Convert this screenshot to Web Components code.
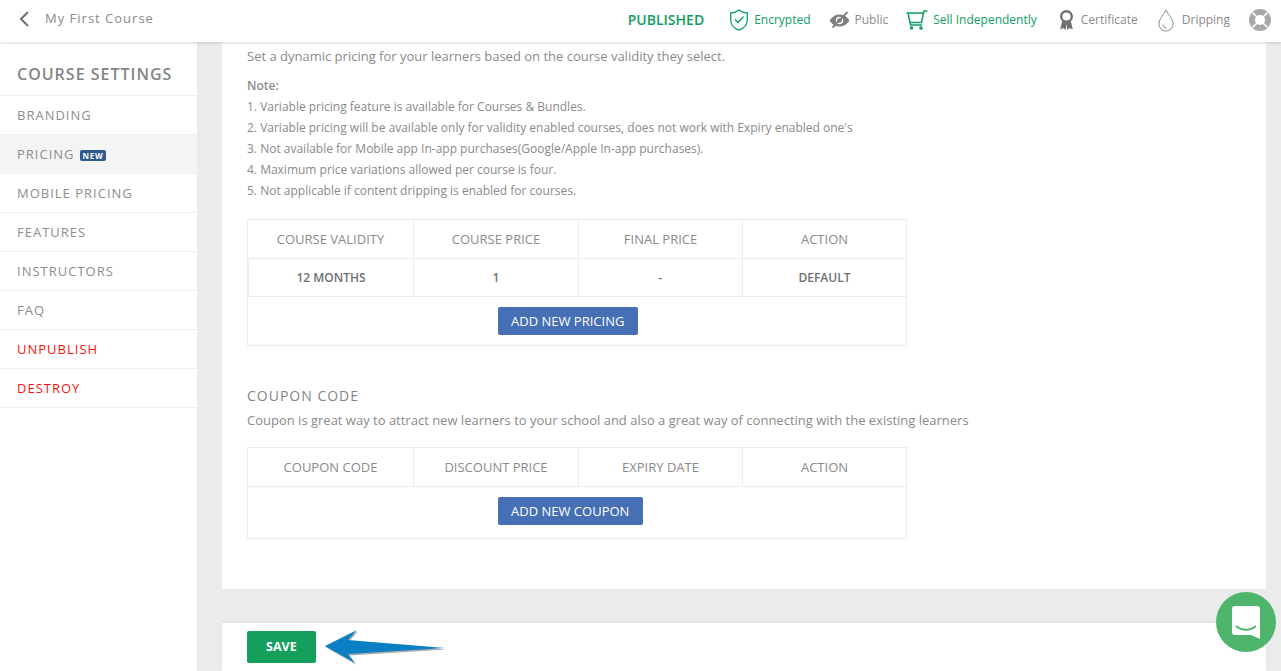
<!DOCTYPE html>
<html>
<head>
<meta charset="utf-8">
<title>Course settings</title>
<style>
    html, body { margin: 0; height: 671px; overflow: hidden; background: #ebebeb; }
    body { font-family: "Open Sans", "Liberation Sans", sans-serif; color: #8a8a8a; }
    .page { display: grid; grid-template-columns: 197px 1fr; height: 671px; grid-template-rows: 42px 1fr; }
    app-topbar { grid-column: 1 / 3; }
</style>
</head>
<body>
<div class="page">
    <app-topbar title="My First Course">
        <top-item color="#0f9d63" label="Encrypted" icon="shield" gap="6"></top-item>
        <top-item label="Public" icon="eye" gap="5"></top-item>
        <top-item color="#0f9d63" label="Sell Independently" icon="cart" gap="5"></top-item>
        <top-item label="Certificate" icon="ribbon" gap="7" style="margin-left:4px"></top-item>
        <top-item label="Dripping" icon="drop" gap="8" style="margin-left:2px"></top-item>
    </app-topbar>
    <side-nav>
        <nav-item>BRANDING</nav-item>
        <nav-item active badge="NEW">PRICING</nav-item>
        <nav-item>MOBILE PRICING</nav-item>
        <nav-item>FEATURES</nav-item>
        <nav-item>INSTRUCTORS</nav-item>
        <nav-item>FAQ</nav-item>
        <nav-item danger>UNPUBLISH</nav-item>
        <nav-item danger>DESTROY</nav-item>
    </side-nav>
    <pricing-panel></pricing-panel>
</div>
<chat-launcher></chat-launcher>

<script>
const icons = {
    shield: `<svg width="18" height="22" viewBox="0 0 18 22" fill="none" stroke="#0f9d63" stroke-width="1.3"><path d="M9 1 C11 2.800 14 3.800 17.300 4 V11 C17.300 16 13.500 19.500 9 21.200 C4.500 19.500 0.700 16 0.700 11 V4 C4 3.800 7 2.800 9 1 Z"/><path d="M5 10.500 L8 13.500 L13.500 7.500"/></svg>`,
    eye: `<svg width="21" height="18" viewBox="0 0 21 18" fill="#808080"><path d="M0.500 9.500 C4 4.500 7.500 3.500 10.500 3.500 C14 3.500 17.500 5 20.500 9.500 C17.500 14 14 15.500 10.500 15.500 C7 15.500 3.500 14 0.500 9.500 Z"/><circle cx="10.500" cy="9.500" r="3.700" fill="#fff"/><circle cx="10.500" cy="9.500" r="2.300"/><path d="M3.500 16.500 L18.500 1" stroke="#808080" stroke-width="1.800"/></svg>`,
    cart: `<svg width="22" height="20" viewBox="0 0 22 20" fill="none" stroke="#0f9d63" stroke-width="1.500"><path d="M0.500 3 H17.500 L15.500 12.500 H4 L2 3"/><path d="M17.500 3 L18.200 1 H21.500"/><path d="M4 12.500 L4.500 15 H16"/><circle cx="5.500" cy="18" r="1.800" fill="#0f9d63" stroke="none"/><circle cx="15" cy="18" r="1.800" fill="#0f9d63" stroke="none"/></svg>`,
    ribbon: `<svg width="15" height="22" viewBox="0 0 15 22"><path d="M3.200 12 L1.200 20.500 L4.600 19 L6.600 21 L7.500 15 L8.400 21 L10.400 19 L13.800 20.500 L11.800 12 L7.500 14 Z" fill="#6f6f6f"/><circle cx="7.500" cy="7.500" r="5.300" fill="#fff" stroke="#6f6f6f" stroke-width="2.400"/></svg>`,
    drop: `<svg width="16" height="23" viewBox="0 0 16 23" fill="none" stroke="#7c7c7c" stroke-width="0.900"><path d="M8 1 C10 5.500 15 9.500 15 15 C15 19 11.800 22 8 22 C4.200 22 1 19 1 15 C1 9.500 6 5.500 8 1 Z"/><path d="M5 15.500 C5 17.500 6.500 19 8.500 19.200"/></svg>`
}

class AppTopbar extends HTMLElement {
    connectedCallback() {
        const root = this.attachShadow({ mode: 'open' })
        root.innerHTML = `<style>
            :host { display: flex; align-items: center; height: 42px; background: #fff; box-shadow: 0 1px 3px rgba(0,0,0,.16); position: relative; z-index: 2; padding: 0 10px 2px 19px; box-sizing: border-box; }
            svg.back { margin-right: 16px; margin-bottom: 3px; }
            .title { font-size: 13px; letter-spacing: 1px; color: #8a8a8a; flex: 1; padding-bottom: 5px; }
            .status { font-size: 14px; font-weight: 600; color: #0f9d63; margin-right: 26px; padding-bottom: 2px; }
            .items { display: flex; align-items: center; gap: 18px; }
            .help { margin-left: 19px; display: block; }
        </style>
        <svg class="back" width="10" height="16" viewBox="0 0 10 16" fill="none" stroke="#6f6f6f" stroke-width="2"><path d="M9 1 L2 8 L9 15"/></svg>
        <span class="title">${this.getAttribute('title')}</span>
        <span class="status">PUBLISHED</span>
        <span class="items"><slot></slot></span>
        <svg class="help" width="22" height="22" viewBox="0 0 22 22"><circle cx="11" cy="11" r="8" fill="none" stroke="#a8a8a8" stroke-width="6"/><path d="M3.500 3.500 L8 8 M18.500 3.500 L14 8 M3.500 18.500 L8 14 M18.500 18.500 L14 14" stroke="#fff" stroke-width="1.600"/></svg>`
    }
}

class TopItem extends HTMLElement {
    connectedCallback() {
        const root = this.attachShadow({ mode: 'open' })
        root.innerHTML = `<style>
            :host { display: flex; align-items: center; gap: ${this.getAttribute('gap')}px; font-size: 12px; color: ${this.getAttribute('color') || '#8a8a8a'}; }
            svg { display: block; }
            span { padding-bottom: 1px; }
        </style>${icons[this.getAttribute('icon')]}<span>${this.getAttribute('label')}</span>`
    }
}

class SideNav extends HTMLElement {
    connectedCallback() {
        const root = this.attachShadow({ mode: 'open' })
        root.innerHTML = `<style>
            :host { display: block; background: #fff; height: 629px; }
            h2 { margin: 0; height: 54px; padding: 22px 17px 0; box-sizing: border-box; border-bottom: 1px solid #efefef; font-size: 16px; line-height: 20px; font-weight: 600; letter-spacing: 1px; color: #858585; }
        </style><h2>COURSE SETTINGS</h2><slot></slot>`
    }
}

class NavItem extends HTMLElement {
    connectedCallback() {
        const root = this.attachShadow({ mode: 'open' })
        const badge = this.getAttribute('badge')
        root.innerHTML = `<style>
            :host { display: flex; align-items: center; gap: 5px; height: 39px; box-sizing: border-box; padding: 0 17px 1px; border-bottom: 1px solid #efefef; font-size: 13px; letter-spacing: 1px; color: #8d8d8d; }
            :host([active]) { background: #f4f4f4; }
            :host([danger]) { color: #f8140c; }
            .badge { background: #2d5b8f; color: #fff; font-size: 8px; line-height: 11px; font-weight: 700; padding: 0 3px; border-radius: 2px; letter-spacing: .7px; margin-top: 3px; }
        </style><slot></slot>${badge ? `<span class="badge">${badge}</span>` : ''}`
    }
}

class ActionBtn extends HTMLElement {
    connectedCallback() {
        const root = this.attachShadow({ mode: 'open' })
        root.innerHTML = `<style>
            :host { display: inline-block; background: #466fb6; color: #fff; font-size: 13px; line-height: 28px; height: 28px; padding: 0 14px 0 13px; border-radius: 2px; }
            :host([save]) { background: #14a05c; font-weight: 700; font-size: 12.500px; line-height: 32px; height: 32px; padding: 0 19px; }
        </style><slot></slot>`
    }
}

class DataTable extends HTMLElement {
    connectedCallback() {
        const root = this.attachShadow({ mode: 'open' })
        const cell = (t, cls) => `<div class="${cls}">${t}</div>`
        const head = this.getAttribute('head').split('|').map(t => cell(t, 'th')).join('')
        const row = this.getAttribute('row')
        const body = row ? row.split('|').map(t => cell(t, 'td')).join('') : ''
        root.innerHTML = `<style>
            :host { display: block; width: 660px; box-sizing: border-box; border: 1px solid #ececec; font-size: 13px; }
            .grid { display: grid; grid-template-columns: 165px 165px 164px 164px; }
            .th, .td { display: flex; align-items: center; justify-content: center; border-bottom: 1px solid #ececec; border-left: 1px solid #ececec; }
            .th:first-child { border-left: 0; }
            .th { height: 38px; color: #8a8a8a; }
            .td { height: 37px; font-size: 12px; font-weight: 600; color: #6f6f6f; }
            .foot { padding: 10px 0 0 250px; height: ${this.getAttribute('foot')}px; box-sizing: border-box; }
        </style><div class="grid">${head}${body}</div><div class="foot"><slot></slot></div>`
    }
}

class PricingPanel extends HTMLElement {
    connectedCallback() {
        const root = this.attachShadow({ mode: 'open' })
        root.innerHTML = `<style>
            :host { display: flex; flex-direction: column; padding: 0 15px 0 25px; gap: 34px; height: 629px; position: relative; }
            .card { background: #fff; padding: 0 25px; }
            .main { height: 547px; padding-top: 4px; box-sizing: border-box; }
            .save { height: 48px; padding-top: 8px; box-sizing: border-box; box-shadow: 0 -1px 3px rgba(0,0,0,.06); }
            p { margin: 0; font-size: 13px; line-height: 20px; color: #8a8a8a; }
            .notes { margin: 9px 0 18px; font-size: 12px; line-height: 21px; color: #8a8a8a; }
            .notes b { font-weight: 600; }
            h3 { margin: 40px 0 0; font-size: 14px; line-height: 20px; font-weight: 400; letter-spacing: 1px; color: #858585; }
            h3 + p { margin: 4px 0 17px; }
            .arrow { position: absolute; left: 126px; top: 586px; }
        </style>
        <div class="card main">
            <p>Set a dynamic pricing for your learners based on the course validity they select.</p>
            <div class="notes">
                <b>Note:</b><br>
                1. Variable pricing feature is available for Courses &amp; Bundles.<br>
                2. Variable pricing will be available only for validity enabled courses, does not work with Expiry enabled one's<br>
                3. Not available for Mobile app In-app purchases(Google/Apple In-app purchases).<br>
                4. Maximum price variations allowed per course is four.<br>
                5. Not applicable if content dripping is enabled for courses.
            </div>
            <data-table foot="48" head="COURSE VALIDITY|COURSE PRICE|FINAL PRICE|ACTION" row="12 MONTHS|1|-|DEFAULT"><action-btn>ADD NEW PRICING</action-btn></data-table>
            <h3>COUPON CODE</h3>
            <p>Coupon is great way to attract new learners to your school and also a great way of connecting with the existing learners</p>
            <data-table foot="51" head="COUPON CODE|DISCOUNT PRICE|EXPIRY DATE|ACTION"><action-btn>ADD NEW COUPON</action-btn></data-table>
        </div>
        <div class="card save"><action-btn save>SAVE</action-btn></div>
        <svg class="arrow" width="125" height="38" viewBox="0 0 125 38">
            <path d="M2 18 L34 2 L25 12 L122 20 L25 26 L32 35 Z" fill="#555" opacity=".5" transform="translate(1 1.500)"/>
            <path d="M2 18 L34 2 L25 12 L122 20 L25 26 L32 35 Z" fill="#0a7fc4"/>
        </svg>`
    }
}

class ChatLauncher extends HTMLElement {
    connectedCallback() {
        const root = this.attachShadow({ mode: 'open' })
        root.innerHTML = `<style>
            :host { position: absolute; left: 1216px; top: 592px; width: 60px; height: 60px; border-radius: 50%; background: #4fb56c; display: flex; align-items: center; justify-content: center; z-index: 3; }
        </style>
        <svg width="28" height="33" viewBox="0 0 28 33"><path d="M3 0 H25 A3 3 0 0 1 28 3 V33 L19 29 H3 A3 3 0 0 1 0 26 V3 A3 3 0 0 1 3 0 Z" fill="#fff"/><path d="M4 20 C10 25 18 25 24 20" fill="none" stroke="#4fb56c" stroke-width="1.800"/></svg>`
    }
}

customElements.define('app-topbar', AppTopbar)
customElements.define('top-item', TopItem)
customElements.define('side-nav', SideNav)
customElements.define('nav-item', NavItem)
customElements.define('action-btn', ActionBtn)
customElements.define('data-table', DataTable)
customElements.define('pricing-panel', PricingPanel)
customElements.define('chat-launcher', ChatLauncher)
</script>
</body>
</html>
